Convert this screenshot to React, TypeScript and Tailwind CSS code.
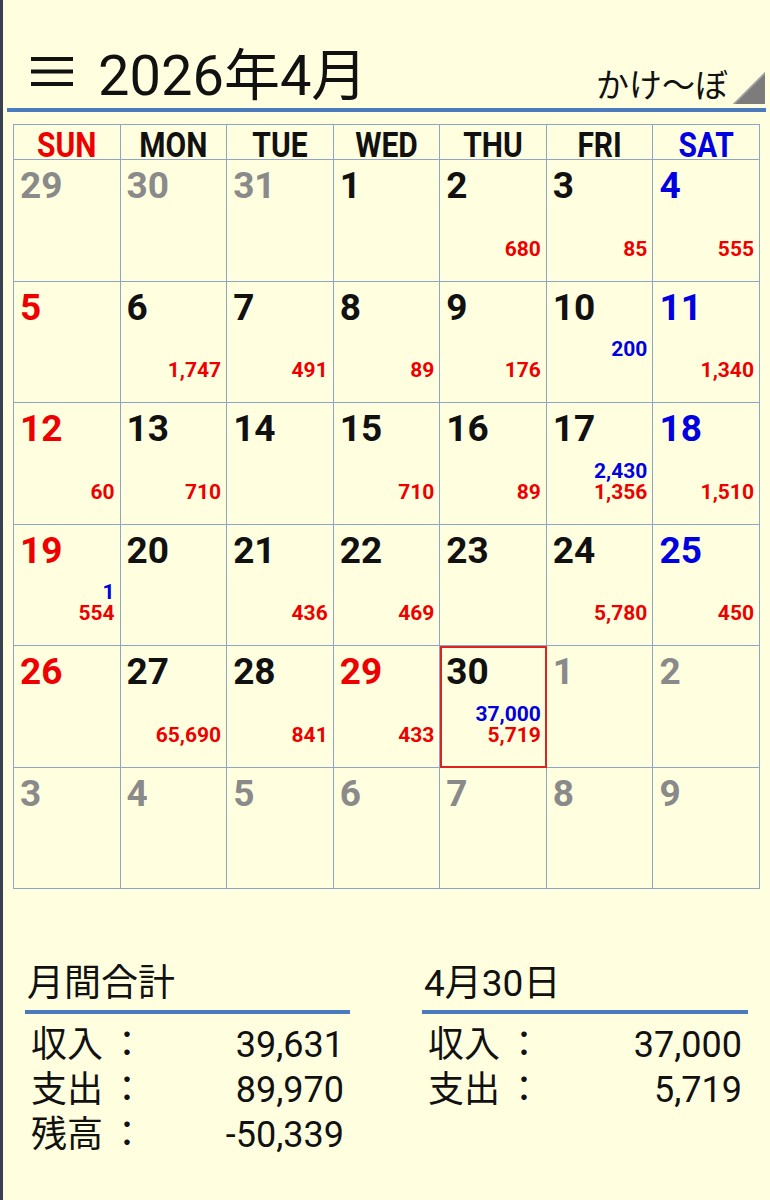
import React from "react";

type Tone = "gray" | "black" | "red" | "blue";

type Day = {
  d: number;
  tone: Tone;
  inc?: string;
  exp?: string;
  today?: boolean;
};

const toneClass: Record<Tone, string> = {
  gray: "text-[#8a8a8a]",
  black: "text-[#111111]",
  red: "text-[#ee0000]",
  blue: "text-[#0000e0]",
};

const weekdays = [
  { label: "SUN", cls: "text-[#ee0000]" },
  { label: "MON", cls: "text-[#111111]" },
  { label: "TUE", cls: "text-[#111111]" },
  { label: "WED", cls: "text-[#111111]" },
  { label: "THU", cls: "text-[#111111]" },
  { label: "FRI", cls: "text-[#111111]" },
  { label: "SAT", cls: "text-[#0000e0]" },
];

const days: Day[] = [
  { d: 29, tone: "gray" },
  { d: 30, tone: "gray" },
  { d: 31, tone: "gray" },
  { d: 1, tone: "black" },
  { d: 2, tone: "black", exp: "680" },
  { d: 3, tone: "black", exp: "85" },
  { d: 4, tone: "blue", exp: "555" },

  { d: 5, tone: "red" },
  { d: 6, tone: "black", exp: "1,747" },
  { d: 7, tone: "black", exp: "491" },
  { d: 8, tone: "black", exp: "89" },
  { d: 9, tone: "black", exp: "176" },
  { d: 10, tone: "black", inc: "200" },
  { d: 11, tone: "blue", exp: "1,340" },

  { d: 12, tone: "red", exp: "60" },
  { d: 13, tone: "black", exp: "710" },
  { d: 14, tone: "black" },
  { d: 15, tone: "black", exp: "710" },
  { d: 16, tone: "black", exp: "89" },
  { d: 17, tone: "black", inc: "2,430", exp: "1,356" },
  { d: 18, tone: "blue", exp: "1,510" },

  { d: 19, tone: "red", inc: "1", exp: "554" },
  { d: 20, tone: "black" },
  { d: 21, tone: "black", exp: "436" },
  { d: 22, tone: "black", exp: "469" },
  { d: 23, tone: "black" },
  { d: 24, tone: "black", exp: "5,780" },
  { d: 25, tone: "blue", exp: "450" },

  { d: 26, tone: "red" },
  { d: 27, tone: "black", exp: "65,690" },
  { d: 28, tone: "black", exp: "841" },
  { d: 29, tone: "red", exp: "433" },
  { d: 30, tone: "black", inc: "37,000", exp: "5,719", today: true },
  { d: 1, tone: "gray" },
  { d: 2, tone: "gray" },

  { d: 3, tone: "gray" },
  { d: 4, tone: "gray" },
  { d: 5, tone: "gray" },
  { d: 6, tone: "gray" },
  { d: 7, tone: "gray" },
  { d: 8, tone: "gray" },
  { d: 9, tone: "gray" },
];

const DayCell = ({ day }: { day: Day }) => (
  <div className="relative flex flex-col border-r border-b border-[#8ea6c6] pl-[6px] pr-[5px]">
    <div className={`pt-[7px] text-[37px] font-bold leading-[37px] ${toneClass[day.tone]}`}>
      {day.d}
    </div>
    {day.inc || day.exp ? (
      <div className="mt-auto pb-[21px] text-right text-[21px] font-bold leading-[21px]">
        {day.inc ? <div className="text-[#0000e0]">{day.inc}</div> : null}
        <div className="text-[#ee0000]">{day.exp ?? "\u00a0"}</div>
      </div>
    ) : null}
    {day.today ? (
      <div className="absolute top-0 left-0 right-[-1px] bottom-[-1px] border-2 border-[#dd2222]" />
    ) : null}
  </div>
);

const SummaryPanel = ({
  title,
  rows,
  className,
}: {
  title: string;
  rows: [string, string][];
  className: string;
}) => (
  <div className={className}>
    <div className="pl-[2px] text-[37px] leading-[44px] text-[#111111]">{title}</div>
    <div className="mt-[4px] h-[4px] bg-[#4b7bbd]" />
    <div className="mt-[9px] px-[6px] text-[36px] leading-[45px] text-[#111111]">
      {rows.map(([label, value]) => (
        <div key={label} className="flex justify-between">
          <span>
            {label}
            <span className="ml-[6px]">：</span>
          </span>
          <span>{value}</span>
        </div>
      ))}
    </div>
  </div>
);

export default function App() {
  return (
    <div className="h-[1200px] w-[770px] overflow-hidden border-l-[3px] border-[#37414f] bg-[#ffffe0] font-[Roboto,'Noto_Sans_CJK_JP',sans-serif]">
      {/* header */}
      <div className="flex h-[108px] items-end">
        <svg
          className="mb-[21px] ml-[28px] h-[30px] w-[42px]"
          viewBox="0 0 42 30"
          fill="#111111"
        >
          <rect x="0" y="0" width="42" height="4" />
          <rect x="0" y="12.5" width="42" height="4" />
          <rect x="0" y="25" width="42" height="4" />
        </svg>
        <div className="mb-[4px] ml-[25px] text-[56px] leading-none text-[#111111]">
          2026年4月
        </div>
        <div className="mb-[6px] ml-auto text-[33px] leading-none text-[#111111]">
          かけ〜ぼ
        </div>
        <svg
          className="mb-[4px] ml-[5px] mr-[5px] h-[32px] w-[32px]"
          viewBox="0 0 32 32"
        >
          <polygon points="32,0 32,32 0,32" fill="#7c7c7c" />
          <polygon points="32,0 32,2 2,32 0,32" fill="#a8a8a8" />
        </svg>
      </div>
      <div className="ml-[4px] h-[4px] w-[759px] bg-[#4b7bbd]" />

      {/* calendar */}
      <div className="ml-[10px] mt-[12px] grid w-[747px] grid-cols-7 grid-rows-[35px_repeat(6,121.5px)] border-t border-l border-[#8ea6c6]">
        {weekdays.map((w) => (
          <div
            key={w.label}
            className={`border-r border-b border-[#8ea6c6] pt-[5px] text-center text-[30px] font-bold leading-[30px] ${w.cls}`}
          >
            <span className="inline-block scale-y-[1.18]">{w.label}</span>
          </div>
        ))}
        {days.map((day, i) => (
          <DayCell key={i} day={day} />
        ))}
      </div>

      {/* summaries */}
      <div className="mt-[73px] flex pl-[22px]">
        <SummaryPanel
          className="w-[325px]"
          title="月間合計"
          rows={[
            ["収入", "39,631"],
            ["支出", "89,970"],
            ["残高", "-50,339"],
          ]}
        />
        <SummaryPanel
          className="ml-[72px] w-[326px]"
          title="4月30日"
          rows={[
            ["収入", "37,000"],
            ["支出", "5,719"],
          ]}
        />
      </div>
    </div>
  );
}
